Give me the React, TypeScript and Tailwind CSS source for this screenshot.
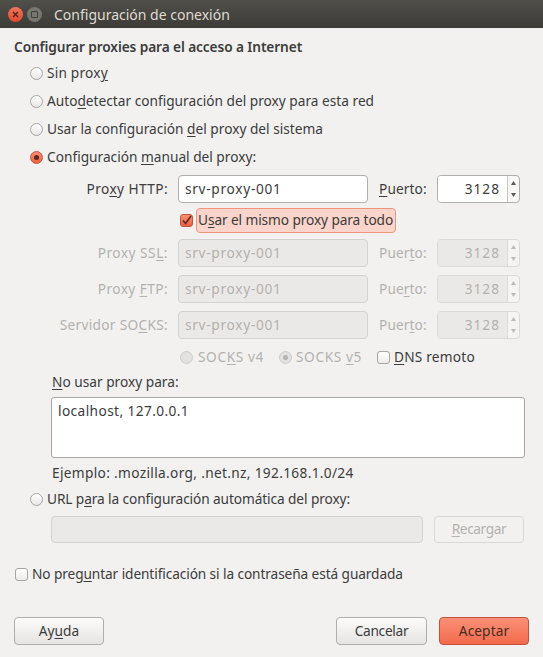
import React from "react";

const U = ({ children }: { children: React.ReactNode }) => (
  <span className="underline decoration-1 underline-offset-2">{children}</span>
);

const Radio = ({ checked, disabled, dot }: { checked?: boolean; disabled?: boolean; dot?: boolean }) => {
  if (checked) {
    return (
      <span className="flex h-[13px] w-[13px] shrink-0 items-center justify-center rounded-full border border-[#c4523a] bg-gradient-to-b from-[#f98d74] to-[#ee5f42]">
        <span className="h-[5px] w-[5px] rounded-full bg-[#5a2a20]" />
      </span>
    );
  }
  if (disabled) {
    return (
      <span className="flex h-[13px] w-[13px] shrink-0 items-center justify-center rounded-full border border-[#cfcdcb] bg-[#e4e2e0]">
        {dot && <span className="h-[5px] w-[5px] rounded-full bg-[#b5b3b1]" />}
      </span>
    );
  }
  return <span className="h-[13px] w-[13px] shrink-0 rounded-full border border-[#a8a5a2] bg-gradient-to-b from-[#ffffff] to-[#e9e7e5]" />;
};

const Check = () => <span className="block h-[13px] w-[13px] shrink-0 rounded-[3px] border border-[#a8a5a2] bg-gradient-to-b from-[#ffffff] to-[#eeecea]" />;

const Spin = ({ disabled }: { disabled?: boolean }) => (
  <div className={`flex h-7 w-[83px] rounded-[4px] border ${disabled ? "border-[#dcdad8] bg-[#f5f4f3]" : "border-[#b0aeab] bg-[#f8f7f6]"}`}>
    <div
      className={`flex w-[70px] items-center justify-end rounded-l-[3px] border-r pr-[7px] tracking-[1px] ${
        disabled ? "border-[#dcdad8] bg-[#ebe9e8] text-[#b3b1af]" : "border-[#c8c6c4] bg-white text-[#3c3c3c]"
      }`}
    >
      3128
    </div>
    <div className="flex flex-1 flex-col items-center justify-center gap-2">
      <svg width="5" height="4" viewBox="0 0 5 4"><path d="M2.5 0L5 4H0z" fill={disabled ? "#bdbbb9" : "#5a5a5a"} /></svg>
      <svg width="5" height="4" viewBox="0 0 5 4"><path d="M0 0h5L2.5 4z" fill={disabled ? "#bdbbb9" : "#5a5a5a"} /></svg>
    </div>
  </div>
);

const ProxyRow = ({ label, port, disabled, mt, track }: { label: React.ReactNode; port: React.ReactNode; disabled?: boolean; mt: string; track: string }) => (
  <div className={`flex h-7 items-center ${mt} ${disabled ? "text-[#b3b1af]" : "text-[#3c3c3c]"}`}>
    <div className={`w-[154px] text-right ${track}`}>{label}</div>
    <div
      className={`ml-[10px] flex h-7 w-[190px] items-center rounded-[4px] border px-[6px] tracking-[0.7px] ${
        disabled ? "border-[#d5d3d1] bg-[#ebe9e8]" : "border-[#b0aeab] bg-white"
      }`}
    >
      srv-proxy-001
    </div>
    <div className="ml-[11px] w-[58px] tracking-[0.1px]">{port}</div>
    <Spin disabled={disabled} />
  </div>
);

const Btn = ({ children, className }: { children: React.ReactNode; className: string }) => (
  <div className={`flex h-7 items-center justify-center rounded-[4px] border ${className}`}>{children}</div>
);

export default function App() {
  return (
    <div className="h-[657px] w-[543px] overflow-hidden bg-[#f2f1f0] font-['Noto_Sans',sans-serif] text-[13.7px] text-[#3c3c3c]">
      <div className="flex h-7 items-center bg-gradient-to-b from-[#504f4a] to-[#3c3b37] pl-2">
        <span className="flex h-[15px] w-[15px] items-center justify-center rounded-full bg-gradient-to-b from-[#f0765a] to-[#e0482c]">
          <svg width="7" height="7" viewBox="0 0 7 7"><path d="M1 1l5 5M6 1L1 6" stroke="#4a2018" strokeWidth="1.3" /></svg>
        </span>
        <span className="ml-1 flex h-[15px] w-[15px] items-center justify-center rounded-full bg-[#77766f]">
          <span className="h-[7px] w-[7px] rounded-[1px] border border-[#3f3e3a]" />
        </span>
        <span className="ml-3 text-[14px] text-[#dfdbd2]">Configuración de conexión</span>
      </div>

      <div className="px-[14px]">
        <div className="mt-[9px] flex h-5 items-center font-semibold tracking-[-0.1px]">Configurar proxies para el acceso a Internet</div>

        <div className="mt-[2px] pl-4">
          <div className="flex h-7 items-center gap-1"><Radio /><span className="tracking-[0.2px]">Sin prox<U>y</U></span></div>
          <div className="flex h-7 items-center gap-1"><Radio /><span>Auto<U>d</U>etectar configuración del proxy para esta red</span></div>
          <div className="flex h-7 items-center gap-1"><Radio /><span>Usar la configuración <U>d</U>el proxy del sistema</span></div>
          <div className="flex h-7 items-center gap-1"><Radio checked /><span>Configuración <U>m</U>anual del proxy:</span></div>
        </div>

        <ProxyRow mt="mt-1" track="tracking-[0.4px]" label={<>Pro<U>x</U>y HTTP:</>} port={<><U>P</U>uerto:</>} />

        <div className="ml-[166px] mt-[5px] flex h-[25px] items-center">
          <span className="flex h-[13px] w-[13px] shrink-0 items-center justify-center rounded-[3px] border border-[#c4523a] bg-gradient-to-b from-[#f98d74] to-[#ee5f42]">
            <svg width="11" height="11" viewBox="0 0 11 11"><path d="M2 5.5l2.5 3L10 1" fill="none" stroke="#5a2a20" strokeWidth="1.6" /></svg>
          </span>
          <span className="ml-[3px] flex h-[25px] w-[200px] items-center whitespace-nowrap rounded-[4px] border border-[#f0947e] bg-[#fbd5cb] pl-[1px] tracking-[-0.1px]">
            <span>U<U>s</U>ar el mismo proxy para todo</span>
          </span>
        </div>

        <ProxyRow disabled mt="mt-[6px]" track="tracking-[0.5px]" label={<>Proxy SS<U>L</U>:</>} port={<>Puer<U>t</U>o:</>} />
        <ProxyRow disabled mt="mt-2" track="tracking-[0.4px]" label={<>Proxy <U>F</U>TP:</>} port={<>Pue<U>r</U>to:</>} />
        <ProxyRow disabled mt="mt-2" track="tracking-[0.3px]" label={<>Servidor SO<U>C</U>KS:</>} port={<>Puer<U>t</U>o:</>} />

        <div className="ml-[166px] mt-2 flex h-5 items-center">
          <Radio disabled />
          <span className="ml-[5px] w-[68px] tracking-[0.6px] text-[#b3b1af]">SOC<U>K</U>S v4</span>
          <span className="ml-[13px] block"><Radio disabled dot /></span>
          <span className="ml-1 w-[69px] tracking-[0.6px] text-[#b3b1af]">SOCKS <U>v</U>5</span>
          <span className="ml-[12px] block shrink-0"><Check /></span>
          <span className="ml-[4px] tracking-[0.2px]"><U>D</U>NS remoto</span>
        </div>

        <div className="ml-[38px] mt-[5px] flex h-5 items-center"><span><U>N</U>o usar proxy para:</span></div>
        <div className="ml-[37px] mt-[5px] h-[61px] w-[474px] rounded-[3px] border border-[#a8a6a3] bg-white px-[6px] pt-[3px] tracking-[0.4px]">localhost, 127.0.0.1</div>
        <div className="ml-[38px] mt-[5px] flex h-5 items-center tracking-[0.33px]">Ejemplo: .mozilla.org, .net.nz, 192.168.1.0/24</div>

        <div className="ml-4 mt-[6px] flex h-5 items-center gap-[4px]"><Radio /><span className="tracking-[-0.1px]">URL p<U>a</U>ra la configuración automática del proxy:</span></div>

        <div className="ml-[37px] mt-[7px] flex h-[27px] items-center">
          <div className="h-full w-[372px] rounded-[4px] border border-[#d5d3d1] bg-[#ebe9e8]" />
          <Btn className="ml-[11px] !h-[27px] w-[90px] border-[#dcdad8] bg-[#f2f1f0] tracking-[-0.4px] text-[#b3b1af]"><span><U>R</U>ecargar</span></Btn>
        </div>

        <div className="ml-[1px] mt-[21px] flex h-5 items-center gap-[4px]"><Check /><span className="tracking-[-0.1px]">No preg<U>u</U>ntar identificación si la contraseña está guardada</span></div>

        <div className="mt-[33px] flex items-center">
          <Btn className="w-[90px] border-[#b0aeab] bg-gradient-to-b from-[#fbfbfa] to-[#e6e4e2]"><span>Ay<U>u</U>da</span></Btn>
          <Btn className="ml-auto w-[91px] border-[#b0aeab] bg-gradient-to-b from-[#fbfbfa] to-[#e6e4e2] tracking-[-0.3px]">Cancelar</Btn>
          <Btn className="ml-3 w-[90px] border-[#c4523a] bg-gradient-to-b from-[#fb9077] to-[#f26a4c] tracking-[0.1px] text-[#4a2a22]">Aceptar</Btn>
        </div>
      </div>
    </div>
  );
}
